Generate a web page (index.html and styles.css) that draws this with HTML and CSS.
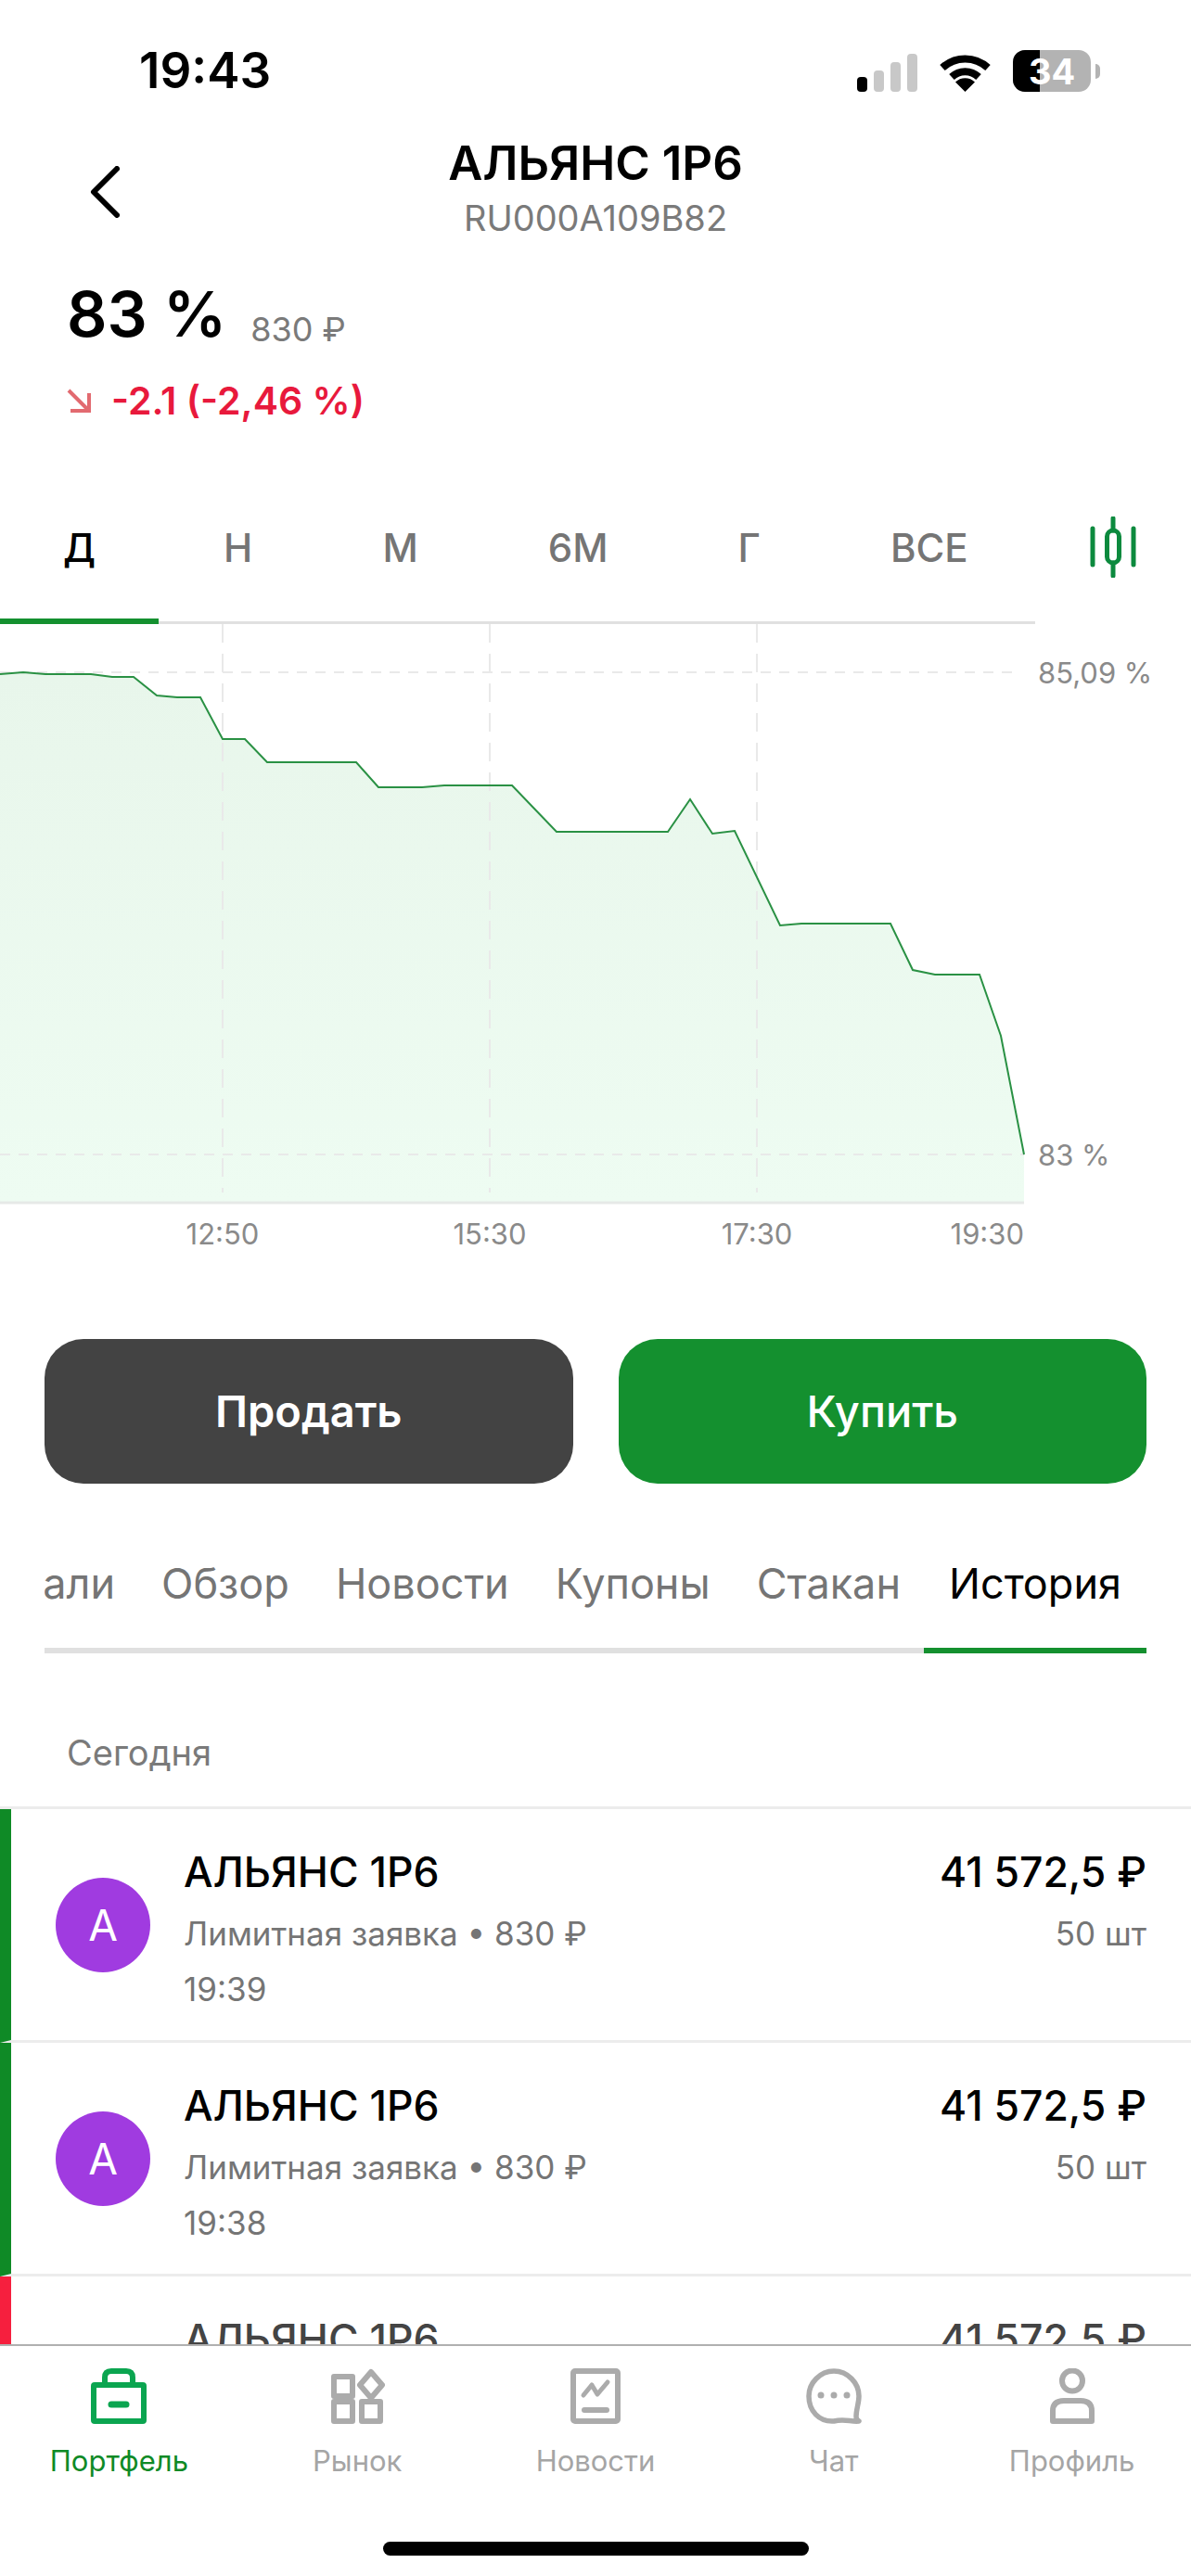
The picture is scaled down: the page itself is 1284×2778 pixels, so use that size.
FILE: index.html
```html
<!DOCTYPE html>
<html lang="ru">

<head>
    <meta charset="UTF-8">
    <meta name="viewport" content="width=device-width, initial-scale=1.0">
    <title>АЛЬЯНС 1Р6</title>
    <link rel="stylesheet" href="styles.css">
</head>

<body>
    <div class="screen">
        <div class="status-bar">
            <span class="clock">19:43</span>
            <div class="status-icons">
                <svg class="signal" width="65" height="41" viewBox="0 0 65 41">
                    <rect x="0" y="25" width="11" height="16" rx="4" fill="#000" />
                    <rect x="18" y="18" width="11" height="23" rx="4" fill="#c8c8c8" />
                    <rect x="36" y="9" width="11" height="32" rx="4" fill="#c8c8c8" />
                    <rect x="54" y="0" width="11" height="41" rx="4" fill="#c8c8c8" />
                </svg>
                <svg class="wifi" width="57" height="42" viewBox="0 0 57 42">
                    <path d="M4 16 A36 36 0 0 1 53 16" fill="none" stroke="#000" stroke-width="8" />
                    <path d="M14 26 A21 21 0 0 1 43 26" fill="none" stroke="#000" stroke-width="8" />
                    <path d="M28.500 42 L18 31.500 A15 15 0 0 1 39 31.500 Z" fill="#000" />
                </svg>
                <div class="battery">
                    <div class="battery-level"></div>
                    <span class="battery-text">34</span>
                </div>
                <div class="battery-tip"></div>
            </div>
        </div>

        <div class="nav">
            <svg class="back" width="32" height="56" viewBox="0 0 32 56">
                <path d="M29 3 L4 28 L29 53" fill="none" stroke="#000" stroke-width="6" stroke-linecap="round" stroke-linejoin="round" />
            </svg>
            <div class="nav-title">
                <div class="name">АЛЬЯНС 1Р6</div>
                <div class="isin">RU000A109B82</div>
            </div>
        </div>

        <div class="quote">
            <div class="price-row">
                <span class="price">83 %</span>
                <span class="price-rub">830 ₽</span>
            </div>
            <div class="change-row">
                <svg width="26" height="26" viewBox="0 0 26 26">
                    <path d="M2 2 L23 23 M4 24 H24 V5" fill="none" stroke="#e26a70" stroke-width="4" />
                </svg>
                <span class="change">-2.1 (-2,46 %)</span>
            </div>
        </div>

        <div class="periods">
            <div class="period active">Д</div>
            <div class="period">Н</div>
            <div class="period">М</div>
            <div class="period">6М</div>
            <div class="period">Г</div>
            <div class="period">ВСЕ</div>
            <svg class="candles" width="50" height="66" viewBox="0 0 50 66">
                <path d="M3 13 V52 M47 13 V52 M25 2 V15 M25 50 V64" fill="none" stroke="#0c8a3e" stroke-width="5" stroke-linecap="round" />
                <rect x="18.500" y="15" width="13" height="35" rx="6.500" fill="none" stroke="#0c8a3e" stroke-width="5" />
            </svg>
        </div>

        <svg class="chart" width="1284" height="680" viewBox="0 673 1284 680">
            <defs>
                <linearGradient id="areaFill" x1="0" y1="0" x2="0" y2="1">
                    <stop offset="0" stop-color="#e8f6eb" />
                    <stop offset="1" stop-color="#eefcf2" />
                </linearGradient>
            </defs>
            <path fill="url(#areaFill)" d="M0 727 L25 725 L49 727 L98 727 L121 730 L144 730 L169 750 L191 752 L216 752 L240 797 L264 797 L288 822 L384 822 L408 849 L455 849 L479 847 L552 847 L600 897 L720 897 L744 862 L768 899 L792 896 L841 998 L864 996 L960 996 L984 1046 L1008 1051 L1056 1051 L1079 1117 L1104 1245 L1104 1296 L0 1296 Z" />
            <path class="grid-line" d="M240 673 V1286 M528 673 V1286 M816 673 V1286" stroke-dasharray="20 12" />
            <path class="grid-line" d="M0 725 H1095 M0 1245 H1104" stroke-dasharray="11 9" />
            <path class="base-line" d="M0 1297 H1104" />
            <path class="price-line" d="M0 727 L25 725 L49 727 L98 727 L121 730 L144 730 L169 750 L191 752 L216 752 L240 797 L264 797 L288 822 L384 822 L408 849 L455 849 L479 847 L552 847 L600 897 L720 897 L744 862 L768 899 L792 896 L841 998 L864 996 L960 996 L984 1046 L1008 1051 L1056 1051 L1079 1117 L1104 1245" />
            <text class="axis" x="1119" y="737">85,09 %</text>
            <text class="axis" x="1119" y="1257">83 %</text>
            <text class="axis" x="240" y="1342" text-anchor="middle">12:50</text>
            <text class="axis" x="528" y="1342" text-anchor="middle">15:30</text>
            <text class="axis" x="816" y="1342" text-anchor="middle">17:30</text>
            <text class="axis" x="1104" y="1342" text-anchor="end">19:30</text>
        </svg>

        <div class="actions">
            <div class="btn btn-sell">Продать</div>
            <div class="btn btn-buy">Купить</div>
        </div>

        <div class="sections">
            <div class="section">Детали</div>
            <div class="section">Обзор</div>
            <div class="section">Новости</div>
            <div class="section">Купоны</div>
            <div class="section">Стакан</div>
            <div class="section active">История</div>
        </div>

        <div class="day">Сегодня</div>

        <div class="history">
            <div class="order">
                <div class="avatar">А</div>
                <div class="order-info">
                    <div class="order-name">АЛЬЯНС 1Р6</div>
                    <div class="order-sub">Лимитная заявка • 830 ₽</div>
                    <div class="order-sub">19:39</div>
                </div>
                <div class="order-sum">
                    <div class="order-name">41 572,5 ₽</div>
                    <div class="order-sub">50 шт</div>
                </div>
            </div>
            <div class="order">
                <div class="avatar">А</div>
                <div class="order-info">
                    <div class="order-name">АЛЬЯНС 1Р6</div>
                    <div class="order-sub">Лимитная заявка • 830 ₽</div>
                    <div class="order-sub">19:38</div>
                </div>
                <div class="order-sum">
                    <div class="order-name">41 572,5 ₽</div>
                    <div class="order-sub">50 шт</div>
                </div>
            </div>
            <div class="order order-sell">
                <div class="avatar">А</div>
                <div class="order-info">
                    <div class="order-name">АЛЬЯНС 1Р6</div>
                    <div class="order-sub">Лимитная заявка • 830 ₽</div>
                    <div class="order-sub">19:37</div>
                </div>
                <div class="order-sum">
                    <div class="order-name">41 572,5 ₽</div>
                    <div class="order-sub">50 шт</div>
                </div>
            </div>
        </div>

        <div class="tabbar">
            <div class="tabs">
                <div class="tab active">
                    <svg width="60" height="60" viewBox="0 0 60 60">
                        <path d="M15 15 V10 Q15 3 22 3 H38 Q45 3 45 10 V15" fill="none" stroke="#0ba550" stroke-width="6" />
                        <rect x="3" y="18" width="54" height="39" rx="1" fill="none" stroke="#0ba550" stroke-width="6" />
                        <path d="M22 39 H38" fill="none" stroke="#0ba550" stroke-width="7" stroke-linecap="round" />
                    </svg>
                    <span>Портфель</span>
                </div>
                <div class="tab">
                    <svg width="60" height="60" viewBox="0 0 60 60">
                        <g fill="none" stroke="#ababab" stroke-width="6" stroke-linejoin="round">
                            <rect x="5" y="9" width="20" height="21" />
                            <path d="M45 4 L57 18 L45 32 L33 18 Z" />
                            <rect x="5" y="36" width="20" height="21" />
                            <rect x="35" y="36" width="20" height="21" />
                        </g>
                    </svg>
                    <span>Рынок</span>
                </div>
                <div class="tab">
                    <svg width="60" height="60" viewBox="0 0 60 60">
                        <rect x="6" y="3" width="48" height="54" rx="2" fill="none" stroke="#ababab" stroke-width="6" />
                        <path d="M17 29 L26 18 L32 28 L43 15" fill="none" stroke="#ababab" stroke-width="5" stroke-linecap="round" stroke-linejoin="round" />
                        <path d="M18 45 H42" fill="none" stroke="#ababab" stroke-width="6" stroke-linecap="round" />
                    </svg>
                    <span>Новости</span>
                </div>
                <div class="tab">
                    <svg width="60" height="60" viewBox="0 0 60 60">
                        <path d="M30 3 C45 3 57 16 57 30 C57 38 54 44 54 52 C54 54 55 56 57 57 C48 58 42 54 30 57 C14 58 3 46 3 30 C3 16 15 3 30 3 Z" fill="none" stroke="#ababab" stroke-width="5.500" stroke-linejoin="round" />
                        <circle cx="16" cy="29" r="3.500" fill="#ababab" />
                        <circle cx="30" cy="29" r="3.500" fill="#ababab" />
                        <circle cx="44" cy="29" r="3.500" fill="#ababab" />
                    </svg>
                    <span>Чат</span>
                </div>
                <div class="tab">
                    <svg width="60" height="60" viewBox="0 0 60 60">
                        <ellipse cx="30" cy="13.500" rx="11" ry="11" fill="none" stroke="#ababab" stroke-width="6" />
                        <path d="M9 57 H51 Q51 57 51 48 V46 Q51 35 39 35 H21 Q9 35 9 46 V48 Q9 57 9 57 Z" fill="none" stroke="#ababab" stroke-width="6" stroke-linejoin="round" />
                    </svg>
                    <span>Профиль</span>
                </div>
            </div>
            <div class="home-bar"></div>
        </div>
    </div>
</body>

</html>
```

FILE: styles.css
```css
* {
    box-sizing: border-box;
}

body {
    margin: 0;
    padding: 0;
    background-color: #fff;
    font-family: Inter, 'Noto Sans', sans-serif;
    color: #000;
}

.screen {
    width: 1284px;
    height: 2778px;
    display: flex;
    flex-direction: column;
    overflow: hidden;
}

/* status bar */
.status-bar {
    height: 130px;
    flex-shrink: 0;
    display: flex;
    justify-content: space-between;
    padding: 50px 98px 0 150px;
}

.clock {
    font-size: 53px;
    line-height: 52px;
    font-weight: 600;
}

.status-icons {
    display: flex;
    align-items: flex-end;
    height: 46px;
    margin-top: 3px;
}

.signal {
    margin-right: 23px;
}

.wifi {
    margin-right: 23px;
}

.battery {
    position: relative;
    width: 84px;
    height: 45px;
    border-radius: 13px;
    background-color: #b3b3b3;
    overflow: hidden;
    display: flex;
    align-items: center;
    justify-content: center;
}

.battery-level {
    position: absolute;
    left: 0;
    top: 0;
    bottom: 0;
    width: 29px;
    background-color: #000;
}

.battery-text {
    position: relative;
    font-size: 38px;
    font-weight: 700;
    color: #fff;
}

.battery-tip {
    width: 5px;
    height: 16px;
    margin: 0 0 14px 5px;
    border-radius: 0 8px 8px 0;
    background-color: #b3b3b3;
}

/* header */
.nav {
    position: relative;
    height: 130px;
    flex-shrink: 0;
}

.back {
    position: absolute;
    left: 97px;
    top: 49px;
}

.nav-title {
    text-align: center;
}

.name {
    font-size: 51px;
    line-height: 60px;
    font-weight: 600;
    margin-top: 16px;
}

.isin {
    font-size: 38px;
    line-height: 50px;
    color: #7a7a7a;
    margin-top: 4px;
}

.quote {
    padding-left: 72px;
    height: 300px;
    flex-shrink: 0;
}

.price-row {
    display: flex;
    align-items: flex-end;
    margin-top: 33px;
    height: 90px;
}

.price {
    font-size: 68px;
    line-height: 90px;
    font-weight: 600;
}

.price-rub {
    font-size: 36px;
    line-height: 56px;
    color: #7a7a7a;
    margin-left: 26px;
}

.change-row {
    display: flex;
    align-items: center;
    margin-top: 24px;
}

.change {
    font-size: 41px;
    line-height: 50px;
    font-weight: 600;
    color: #e8193c;
    margin-left: 22px;
}

/* period tabs */
.periods {
    position: relative;
    height: 115px;
    flex-shrink: 0;
    margin-top: -2px;
    display: flex;
    width: 1116px;
    border-bottom: 3px solid #e0e0e0;
}

.period {
    padding: 0 70px;
    height: 115px;
    line-height: 66px;
    font-size: 42px;
    font-weight: 500;
    color: #757575;
    white-space: nowrap;
}

.period.active {
    color: #000;
    padding: 0 68px;
    border-bottom: 6px solid #14902f;
}

.candles {
    position: absolute;
    left: 1175px;
    top: -1px;
}

/* chart */
.chart {
    display: block;
    flex-shrink: 0;
}

.grid-line {
    fill: none;
    stroke: #e9e9e9;
    stroke-width: 2;
}

.base-line {
    fill: none;
    stroke: #e6e9e7;
    stroke-width: 3;
}

.price-line {
    fill: none;
    stroke: #2a9144;
    stroke-width: 2;
}

.axis {
    font-size: 31px;
    fill: #8a8a8a;
}

/* buy and sell */
.actions {
    display: flex;
    gap: 49px;
    padding: 0 48px;
    margin-top: 91px;
    flex-shrink: 0;
}

.btn {
    flex: 1;
    height: 156px;
    border-radius: 42px;
    display: flex;
    align-items: center;
    justify-content: center;
    font-size: 47px;
    color: #fff;
    padding-bottom: 2px;
}

.btn-sell {
    background-color: #434343;
    font-weight: 600;
}

.btn-buy {
    background-color: #14902f;
    font-weight: 500;
}

/* section tabs */
.sections {
    display: flex;
    justify-content: flex-end;
    margin: 65px 48px 0;
    height: 118px;
    flex-shrink: 0;
    overflow: hidden;
    box-shadow: inset 0 -6px 0 #e0e0e0;
}

.section {
    padding: 0 25px;
    height: 118px;
    line-height: 86px;
    font-size: 45px;
    color: #757575;
    white-space: nowrap;
    flex-shrink: 0;
}

.section.active {
    color: #000;
    width: 240px;
    text-align: center;
    padding: 0;
    position: relative;
}

.section.active::after {
    content: "";
    position: absolute;
    left: 0;
    right: 0;
    top: 112px;
    height: 6px;
    background-color: #14902f;
}

.day {
    padding-left: 72px;
    margin-top: 80px;
    height: 85px;
    line-height: 54px;
    font-size: 38px;
    color: #7a7a7a;
    flex-shrink: 0;
}

/* history */
.history {
    flex: 1;
    min-height: 0;
    overflow: hidden;
    border-top: 3px solid #ececec;
}

.order {
    height: 252px;
    border-bottom: 3px solid #ececec;
    border-left: 12px solid #0f8a26;
    padding: 41px 48px 0 48px;
    display: flex;
    align-items: flex-start;
}

.order-sell {
    border-left-color: #f61f3e;
}

.order-sell .order-name {
    color: #444;
}

.avatar {
    width: 102px;
    height: 102px;
    border-radius: 50%;
    background-color: #a03be0;
    color: #fff;
    font-size: 46px;
    line-height: 102px;
    text-align: center;
    margin-top: 33px;
    flex-shrink: 0;
}

.order-info {
    margin-left: 36px;
    flex: 1;
}

.order-sum {
    text-align: right;
}

.order-name {
    font-size: 44.500px;
    line-height: 54px;
    font-weight: 500;
}

.order-sub {
    font-size: 35px;
    line-height: 60px;
    color: #757575;
}

.order-name+.order-sub {
    margin-top: 9px;
}

/* bottom navigation */
.tabbar {
    height: 250px;
    flex-shrink: 0;
    background-color: #fff;
    border-top: 2px solid #b0b0b0;
}

.tabs {
    display: grid;
    grid-template-columns: repeat(5, 1fr);
    padding-top: 24px;
}

.tab {
    display: flex;
    flex-direction: column;
    align-items: center;
    font-size: 31px;
    line-height: 40px;
    color: #a5a5a5;
}

.tab svg {
    margin-bottom: 20px;
}

.tab.active {
    color: #0f8a26;
}

.home-bar {
    width: 459px;
    height: 15px;
    margin: 67px auto 0;
    border-radius: 8px;
    background-color: #000;
}
```
